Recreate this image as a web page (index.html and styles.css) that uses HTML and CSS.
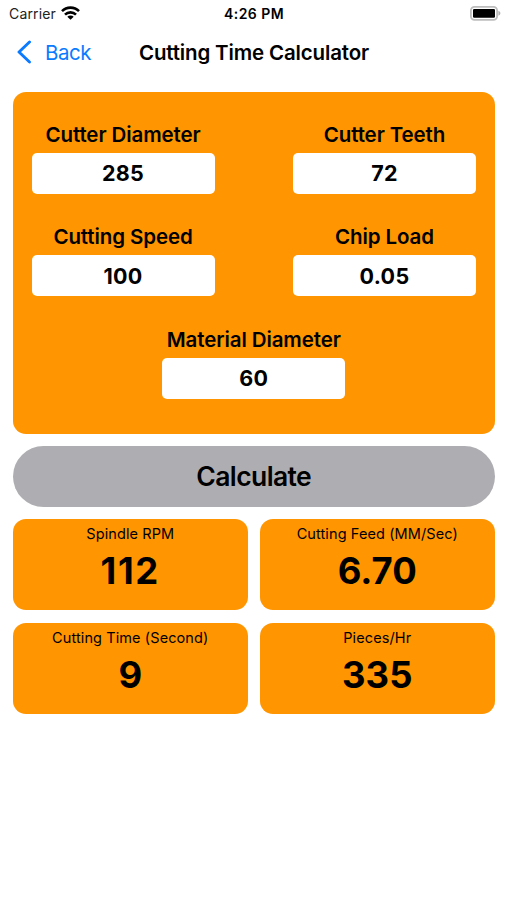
FILE: index.html
```html
<!DOCTYPE html>
<html lang="en">
<head>
  <meta charset="UTF-8">
  <meta name="viewport" content="width=device-width, initial-scale=1.0">
  <title>Cutting Time Calculator</title>
  <link rel="stylesheet" href="styles.css">
</head>
<body>
  <div class="status-bar">
    <div class="carrier">
      <span>Carrier</span>
      <svg class="wifi-icon" width="19" height="14" viewBox="0 0 19 14">
        <g fill="none" stroke="#000" stroke-width="2.6">
          <path d="M1 5.2a12 12 0 0 1 17 0"/>
          <path d="M4 8.6a7.8 7.8 0 0 1 11 0"/>
        </g>
        <path d="M9.5 13.8L6.3 10.8a4.6 4.6 0 0 1 6.4 0z"/>
      </svg>
    </div>
    <div class="clock">4:26 PM</div>
    <svg class="battery-icon" width="31" height="15" viewBox="0 0 31 15">
      <rect x="0.9" y="0.9" width="26.2" height="12.9" rx="3.6" fill="#fff" stroke="#bdbdbd" stroke-width="1.8"/>
      <rect x="3" y="2.9" width="22" height="8.9" rx="1.2"/>
      <path d="M28.4 4.8c1.2.4 2 1.4 2 2.5s-.8 2.1-2 2.5z" fill="#b0b0b0"/>
    </svg>
  </div>

  <div class="nav-bar">
    <a class="back-link" href="#">
      <svg width="15" height="24" viewBox="0 0 15 24">
        <path d="M13.5 2L3 12l10.5 10" fill="none" stroke="#0a7aff" stroke-width="2.9" stroke-linecap="round" stroke-linejoin="round"/>
      </svg>
      <span>Back</span>
    </a>
    <h1>Cutting Time Calculator</h1>
  </div>

  <form class="calculator">
    <div class="input-panel">
      <div class="form-group">
        <label for="cutter-diameter">Cutter Diameter</label>
        <input type="text" id="cutter-diameter" value="285">
      </div>
      <div class="form-group">
        <label for="cutter-teeth">Cutter Teeth</label>
        <input type="text" id="cutter-teeth" value="72">
      </div>
      <div class="form-group">
        <label for="cutting-speed">Cutting Speed</label>
        <input type="text" id="cutting-speed" value="100">
      </div>
      <div class="form-group">
        <label for="chip-load">Chip Load</label>
        <input type="text" id="chip-load" value="0.05">
      </div>
      <div class="form-group full-width">
        <label for="material-diameter">Material Diameter</label>
        <input type="text" id="material-diameter" value="60">
      </div>
    </div>

    <button type="button" class="calculate-btn">Calculate</button>

    <div class="results">
      <div class="result-card rpm">
        <p>Spindle RPM</p>
        <strong>112</strong>
      </div>
      <div class="result-card">
        <p>Cutting Feed (MM/Sec)</p>
        <strong>6.70</strong>
      </div>
      <div class="result-card">
        <p>Cutting Time (Second)</p>
        <strong>9</strong>
      </div>
      <div class="result-card">
        <p>Pieces/Hr</p>
        <strong>335</strong>
      </div>
    </div>
  </form>
</body>
</html>
```
FILE: styles.css
```css
* {
  margin: 0;
  padding: 0;
  box-sizing: border-box;
}

body {
  font-family: Inter, 'Liberation Sans', sans-serif;
  background: #fff;
  min-height: 100vh;
  color: #000;
}

.status-bar {
  display: grid;
  grid-template-columns: 1fr auto 1fr;
  align-items: center;
  height: 27px;
  padding: 0 6px 0 9px;
  font-size: 14px;
}

.carrier {
  display: flex;
  align-items: center;
  gap: 5px;
  color: #222;
  letter-spacing: 0.15px;
}

.wifi-icon {
  margin-top: -2px;
}

.clock {
  font-weight: 600;
  letter-spacing: 0.45px;
  padding-right: 2px;
}

.battery-icon {
  justify-self: end;
}

.nav-bar {
  display: grid;
  grid-template-columns: 1fr auto 1fr;
  align-items: center;
  height: 50px;
  padding: 0 16px;
}

.back-link {
  display: flex;
  align-items: center;
  gap: 14px;
  color: #0a7aff;
  font-size: 20.5px;
  letter-spacing: -0.5px;
  text-decoration: none;
}

.nav-bar h1 {
  font-size: 20.5px;
  font-weight: 600;
  letter-spacing: -0.15px;
  padding-left: 1px;
}

.calculator {
  padding: 14.5px 12.5px 0 13px;
}

.input-panel {
  display: grid;
  grid-template-columns: 183px 183px;
  justify-content: space-between;
  row-gap: 20.7px;
  height: 342px;
  padding: 20px 18.5px 0;
  align-content: start;
  background: #ff9500;
  border-radius: 13px;
}

.form-group {
  display: flex;
  flex-direction: column;
  align-items: center;
  height: 82px;
}

.form-group.full-width {
  grid-column: 1 / -1;
}

.form-group label {
  height: 41px;
  font-size: 20.5px;
  font-weight: 600;
  letter-spacing: -0.1px;
  line-height: 45px;
  white-space: nowrap;
}

.form-group input {
  width: 183px;
  height: 41px;
  border: none;
  border-radius: 5px;
  background: #fff;
  font-family: inherit;
  font-size: 21.5px;
  font-weight: 700;
  letter-spacing: 0.3px;
  text-align: center;
}

.calculate-btn {
  display: block;
  width: 100%;
  height: 61px;
  margin: 12px 0;
  border: none;
  border-radius: 31px;
  background: #aeaeb2;
  color: #000;
  font-family: inherit;
  font-size: 26.5px;
  font-weight: 600;
  letter-spacing: -0.6px;
}

.results {
  display: grid;
  grid-template-columns: 1fr 1fr;
  gap: 12.5px;
}

.result-card {
  height: 91.5px;
  padding-top: 6px;
  background: #ff9500;
  border-radius: 13px;
  text-align: center;
}

.result-card p {
  font-size: 14.5px;
  letter-spacing: 0.1px;
  line-height: 18px;
}

.result-card strong {
  display: block;
  font-size: 36.5px;
  font-weight: 700;
  line-height: 56px;
}

.result-card.rpm strong {
  letter-spacing: 1.6px;
}
```
